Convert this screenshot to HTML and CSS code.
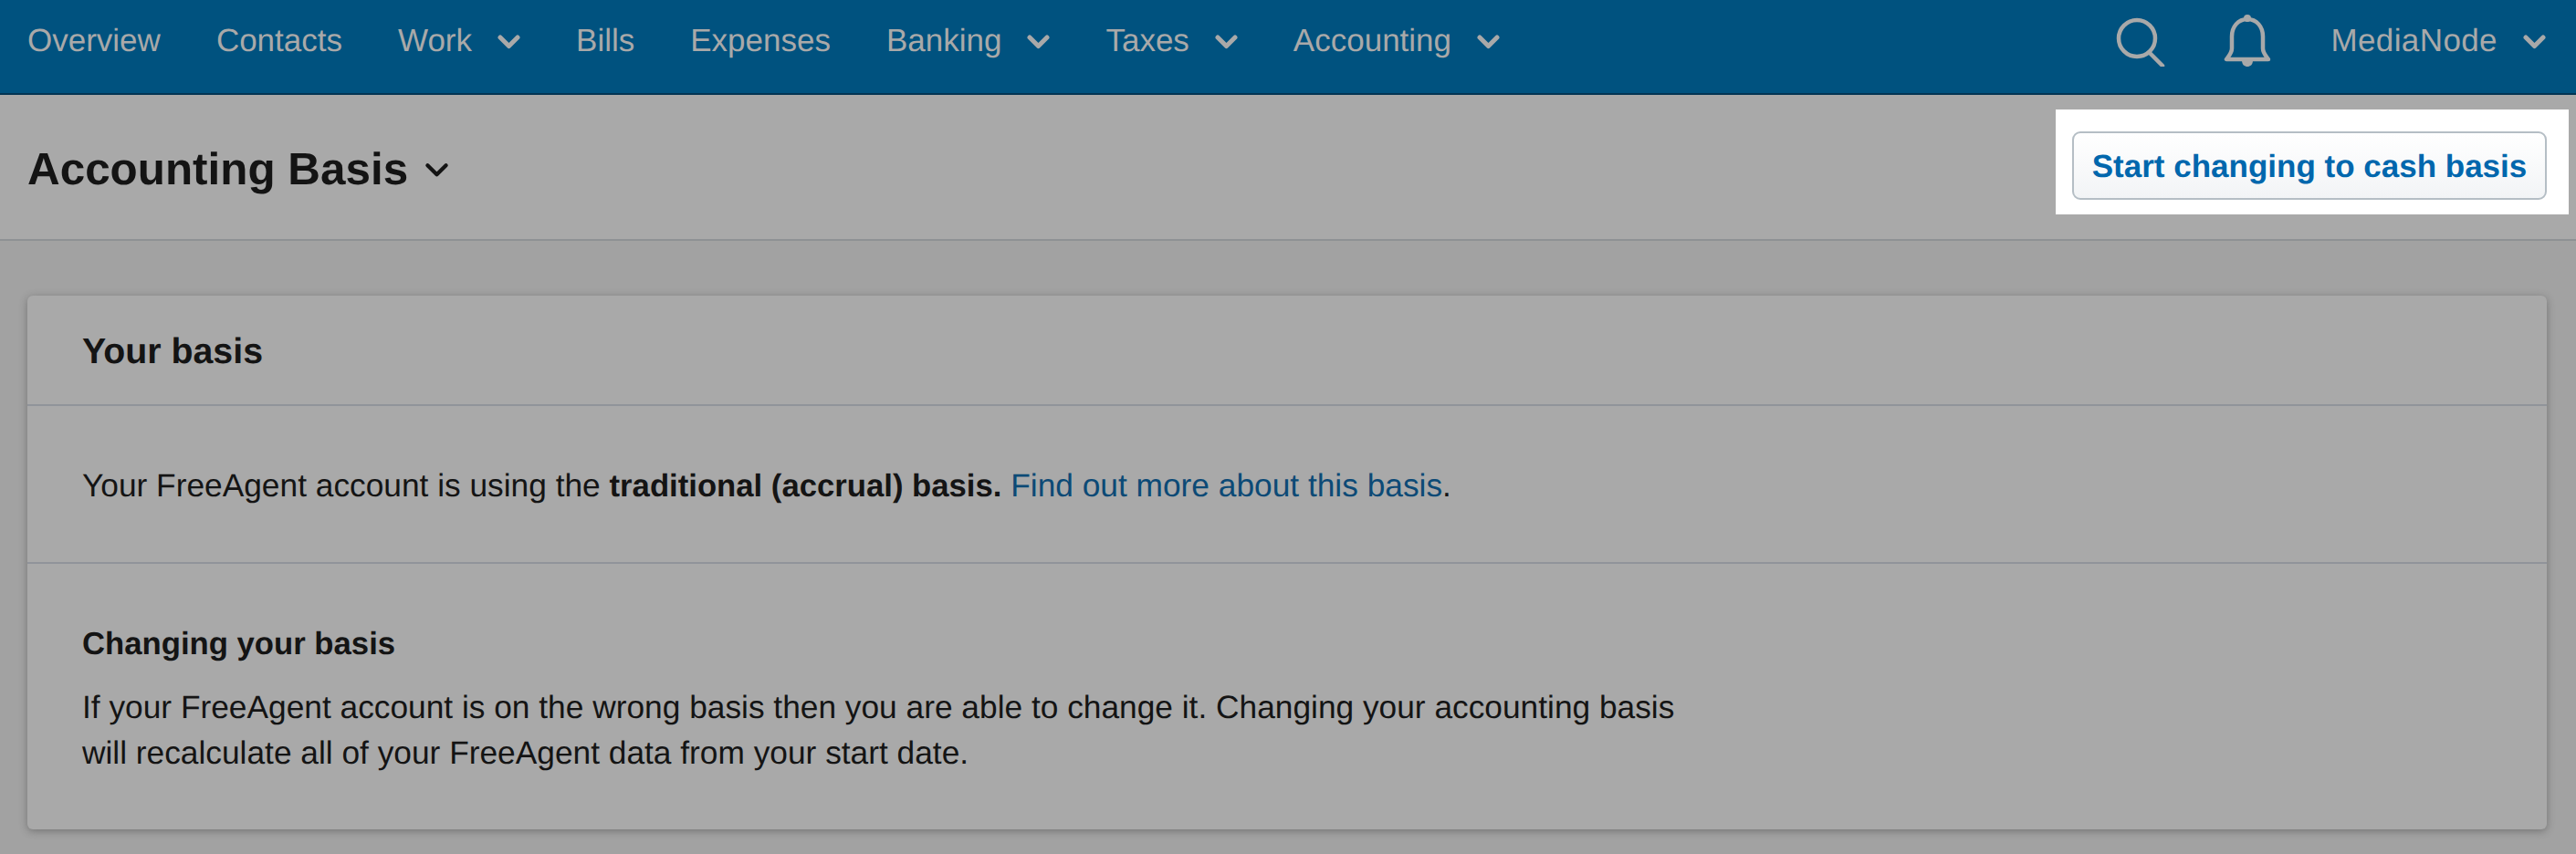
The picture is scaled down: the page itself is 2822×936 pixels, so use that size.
FILE: index.html
```html
<!DOCTYPE html>
<html lang="en">
<head>
<meta charset="utf-8">
<title>Accounting Basis</title>
<link rel="stylesheet" href="styles.css">
</head>
<body>
<nav class="nav">
  <a class="nav-item">Overview</a>
  <a class="nav-item">Contacts</a>
  <a class="nav-item">Work<svg class="chev" viewBox="0 0 25 16"><path d="M3 3l9.500 9.500L22 3"/></svg></a>
  <a class="nav-item">Bills</a>
  <a class="nav-item">Expenses</a>
  <a class="nav-item">Banking<svg class="chev" viewBox="0 0 25 16"><path d="M3 3l9.500 9.500L22 3"/></svg></a>
  <a class="nav-item">Taxes<svg class="chev" viewBox="0 0 25 16"><path d="M3 3l9.500 9.500L22 3"/></svg></a>
  <a class="nav-item">Accounting<svg class="chev" viewBox="0 0 25 16"><path d="M3 3l9.500 9.500L22 3"/></svg></a>
  <div class="nav-right">
    <svg class="icon-search" viewBox="0 0 54 56"><circle cx="23" cy="25" r="20"/><path d="M37 41l14 14"/></svg>
    <svg class="icon-bell" viewBox="0 0 52 58"><path d="M26 6c-10 0-17 8-17 19v13c0 5-3 8-6 12h46c-3-4-6-7-6-12V25C43 14 36 6 26 6z"/><circle class="fill" cx="26" cy="5" r="4"/><path class="fill" d="M20 51h12c0 5-3 7-6 7s-6-2-6-7z"/></svg>
    <a class="nav-item user">MediaNode<svg class="chev" viewBox="0 0 25 16"><path d="M3 3l9.500 9.500L22 3"/></svg></a>
  </div>
</nav>
<header class="page-head">
  <h1 class="title">Accounting Basis<svg class="title-chev" viewBox="0 0 25 16"><path d="M3 3l9.500 9.500L22 3"/></svg></h1>
  <div class="highlight"><button class="btn">Start changing to cash basis</button></div>
</header>
<main class="main">
  <section class="card">
    <div class="card-head"><h2 class="card-title">Your basis</h2></div>
    <div class="card-row">
      <p class="text">Your FreeAgent account is using the <strong class="strong">traditional (accrual) basis.</strong> <a class="link">Find out more about this basis</a>.</p>
    </div>
    <div class="card-body">
      <h3 class="sub">Changing your basis</h3>
      <p class="text para">If your FreeAgent account is on the wrong basis then you are able to change it. Changing your accounting basis will recalculate all of your FreeAgent data from your start date.</p>
    </div>
  </section>
</main>
</body>
</html>
```
FILE: styles.css
```css
* { box-sizing: border-box; }
html, body { margin: 0; height: 100%; }
body {
  background: #a2a2a2;
  color: #141414;
  font-family: "Liberation Sans", Arial, sans-serif;
  overflow: hidden;
  text-rendering: geometricPrecision;
}
.nav {
  height: 104px;
  background: #00527f;
  border-bottom: 2px solid #033453;
  display: flex;
  align-items: center;
  gap: 61px;
  padding: 0 33px 12px 30px;
  color: #a9a9a9;
  font-size: 35px;
}
.nav-item { display: flex; align-items: center; gap: 28px; white-space: nowrap; }
.user { letter-spacing: 0.4px; }
.chev { width: 25px; height: 16px; margin-top: 2px; }
.chev path, .title-chev path {
  fill: none;
  stroke: #a9a9a9;
  stroke-width: 5;
  stroke-linecap: round;
  stroke-linejoin: round;
}
.nav-right { margin-left: auto; display: flex; align-items: center; }
.icon-search { width: 54px; height: 56px; margin-right: 64px; fill: none; stroke: #a9a9a9; stroke-width: 4.500; stroke-linecap: round; }
.icon-bell { width: 52px; height: 58px; margin-right: 65px; margin-top: -3px; fill: none; stroke: #a9a9a9; stroke-width: 4.500; stroke-linejoin: round; }
.icon-bell .fill { fill: #a9a9a9; stroke: none; }
.page-head {
  height: 160px;
  background: #a9a9a9;
  border-bottom: 2px solid #8e9194;
  display: flex;
  justify-content: space-between;
  align-items: flex-start;
  padding: 16px 8px 0 30px;
}
.title {
  margin: 36px 0 0;
  font-size: 49.400px;
  line-height: 60px;
  font-weight: 700;
  display: flex;
  align-items: center;
  gap: 18px;
}
.title-chev { width: 27px; height: 17px; }
.title-chev path { stroke: #141414; stroke-width: 4; }
.highlight { background: #fff; padding: 24px 24px 16px 18px; width: 562px; height: 115px; }
.btn {
  display: block;
  width: 520px;
  height: 75px;
  border: 2px solid #b5bec5;
  border-radius: 9px;
  background: linear-gradient(#ffffff, #f2f4f6);
  color: #0067ad;
  font: 700 35px "Liberation Sans", Arial, sans-serif;
  text-rendering: geometricPrecision;
  padding: 3px 0 0 0;
}
.main { padding: 60px 32px 0 30px; }
.card {
  background: #a9a9a9;
  border-radius: 6px;
  box-shadow: 0 2px 8px rgba(60, 60, 60, 0.45);
  height: 585px;
}
.card-head { height: 121px; border-bottom: 2px solid #90949a; padding: 4px 60px 0; display: flex; align-items: center; }
.card-title { margin: 0; font-size: 39.300px; font-weight: 700; }
.card-row { height: 173px; border-bottom: 2px solid #90949a; padding: 5px 60px 0; display: flex; align-items: center; }
.card-body { padding: 63px 60px 0; }
.text { margin: 0; font-size: 35.300px; line-height: 50px; }
.strong { font-size: 34.700px; }
.sub { margin: 0; font-size: 34.700px; line-height: 50px; font-weight: 700; }
.para { margin-top: 20px; width: 1760px; }
.link { color: #0c4a76; }
```
